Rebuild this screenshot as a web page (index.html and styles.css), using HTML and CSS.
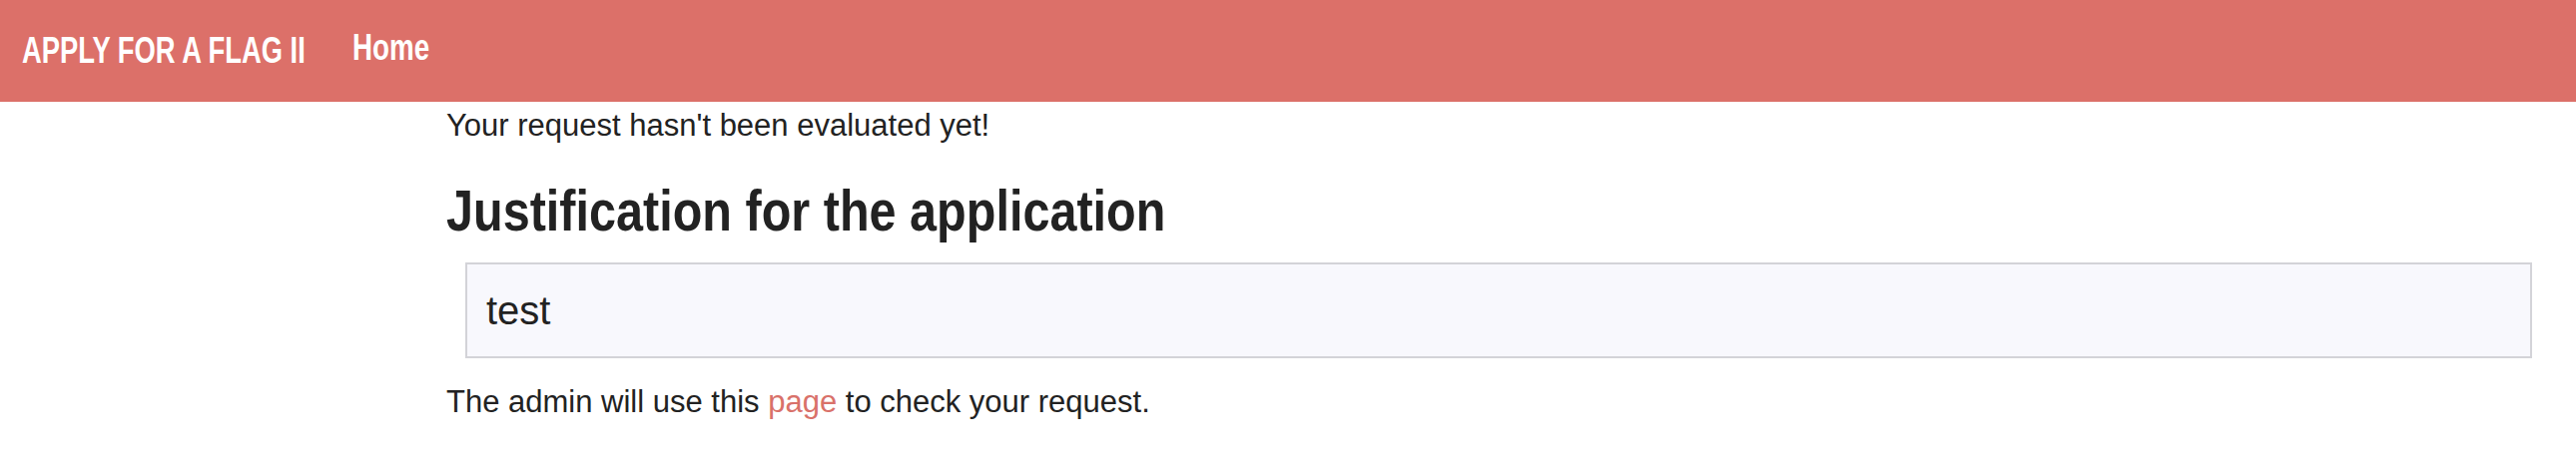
FILE: index.html
```html
<!DOCTYPE html>
<html lang="en">
<head>
<meta charset="utf-8">
<title>Apply for a flag II</title>
<link rel="stylesheet" href="styles.css">
</head>
<body>
<nav class="navbar">
  <div class="brand-slot"><a class="brand" href="#">APPLY FOR A FLAG II</a></div>
  <div class="home-slot"><a class="nav-link" href="#">Home</a></div>
</nav>
<main class="content">
  <p class="status">Your request hasn't been evaluated yet!</p>
  <h2 class="title">Justification for the application</h2>
  <div class="justification">test</div>
  <p class="note">The admin will use this <a href="#" class="link">page</a> to check your request.</p>
</main>
</body>
</html>
```

FILE: styles.css
```css
html, body {
  margin: 0;
  padding: 0;
  background: #ffffff;
}
body {
  font-family: "Liberation Sans", Arial, sans-serif;
  font-size: 31px;
  line-height: 48px;
  color: #222222;
}
.navbar {
  height: 102px;
  background: #dc7069;
  display: flex;
  align-items: center;
  padding: 0 22px;
  gap: 48px;
  box-sizing: border-box;
}
.brand-slot {
  width: 283px;
  display: flex;
}
.home-slot {
  width: 77px;
  display: flex;
  margin-bottom: 8px;
}
.brand, .nav-link {
  display: inline-block;
  font-family: "Liberation Sans", Arial, sans-serif;
  font-weight: 700;
  color: #ffffff;
  text-decoration: none;
  line-height: 1;
  white-space: nowrap;
  transform-origin: left center;
}
.brand {
  font-size: 36px;
  transform: scaleX(0.76);
}
.nav-link {
  font-size: 37px;
  transform: scaleX(0.75);
}
.content {
  padding: 0 44px 0 447px;
}
.status {
  margin: 0 0 26px 0;
}
.title {
  font-family: "Liberation Sans", Arial, sans-serif;
  font-weight: 700;
  font-size: 57px;
  line-height: 70px;
  margin: 0 0 17px 0;
  color: #222222;
  transform: scaleX(0.852);
  transform-origin: left center;
  white-space: nowrap;
}
.justification {
  margin: 0 0 20px 19px;
  padding: 16px 19px;
  background: #f8f8fd;
  border: 2px solid #d3d3d8;
  font-size: 40px;
  line-height: 60px;
}
.note {
  margin: 0;
}
.link {
  color: #d9716a;
  text-decoration: none;
}
```
